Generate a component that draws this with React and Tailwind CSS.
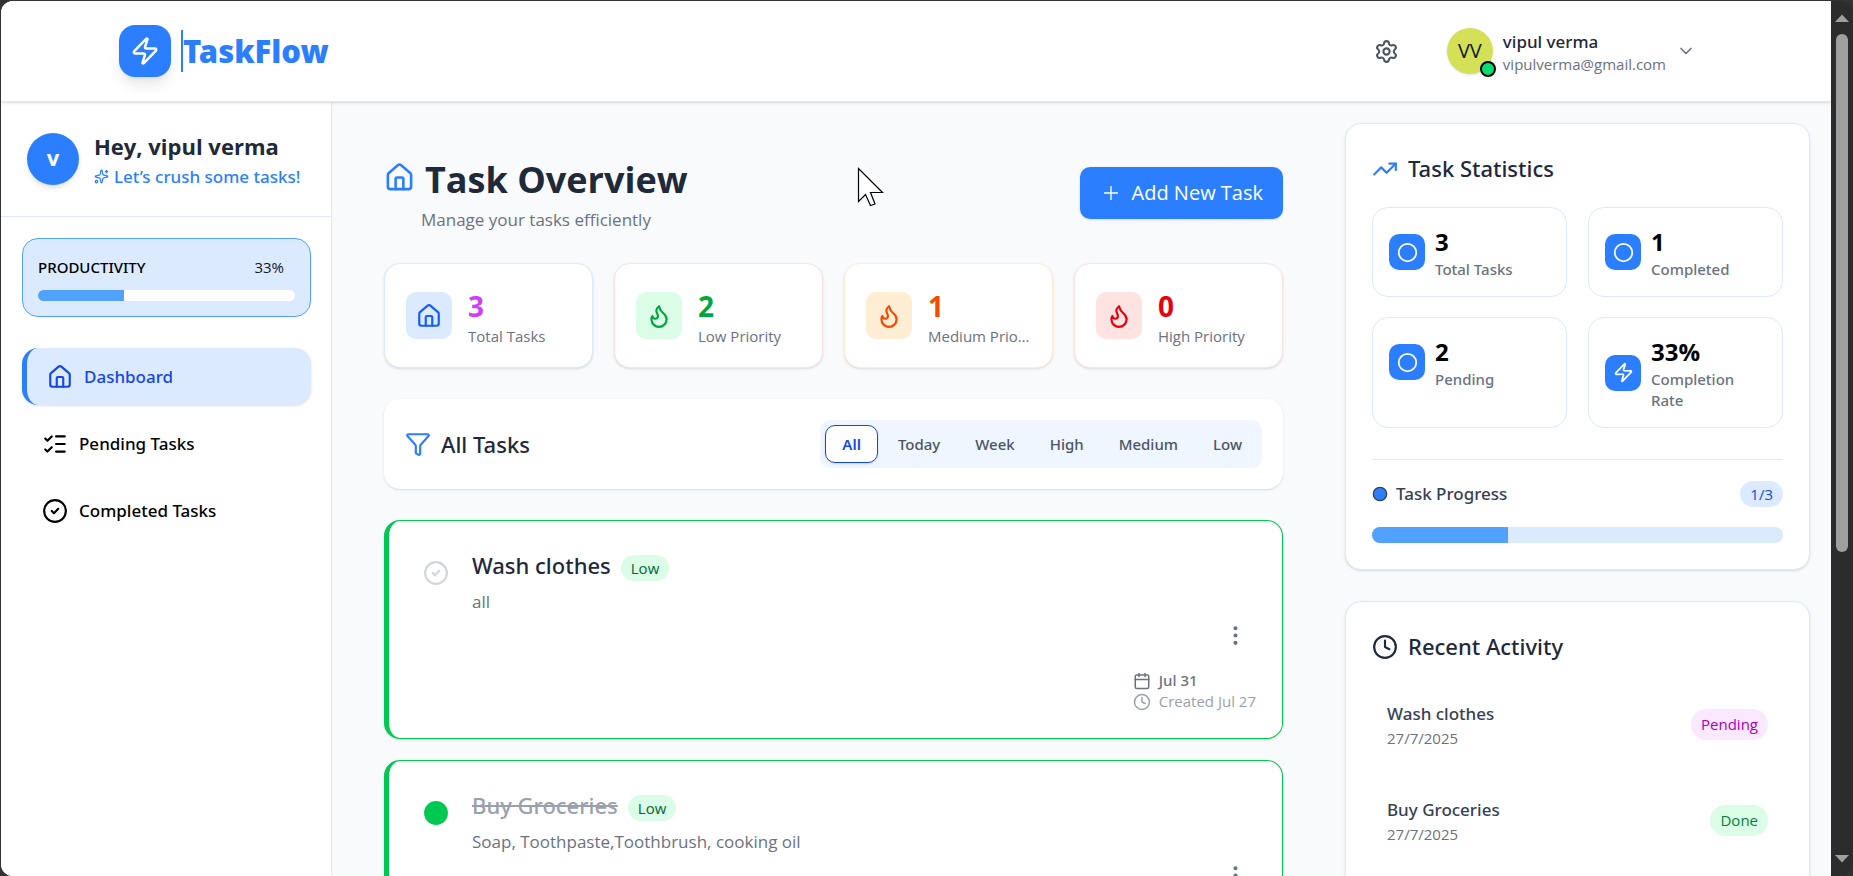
import {
  Calendar,
  ChevronDown,
  Circle,
  CircleCheck,
  Clock,
  EllipsisVertical,
  Flame,
  Funnel,
  House,
  ListChecks,
  Plus,
  Settings,
  Sparkles,
  TrendingUp,
  Zap,
} from "lucide-react";

const priorityStats = [
  { label: "Total Tasks", value: 3, icon: House, border: "border-blue-100", tile: "bg-blue-100 text-blue-600", number: "text-[#d03dfb]" },
  { label: "Low Priority", value: 2, icon: Flame, border: "border-red-100", tile: "bg-green-100 text-green-600", number: "text-green-600" },
  { label: "Medium Priority", value: 1, icon: Flame, border: "border-orange-100", tile: "bg-orange-100 text-orange-600", number: "text-orange-600" },
  { label: "High Priority", value: 0, icon: Flame, border: "border-red-100", tile: "bg-red-100 text-red-600", number: "text-red-600" },
];

const filters = ["All", "Today", "Week", "High", "Medium", "Low"];

const tasks = [
  { title: "Wash clothes", priority: "Low", description: "all", due: "Jul 31", created: "Created Jul 27", done: false },
  { title: "Buy Groceries", priority: "Low", description: "Soap, Toothpaste,Toothbrush, cooking oil", due: "Jul 31", created: "Created Jul 27", done: true },
];

const summary = [
  { label: "Total Tasks", value: "3", icon: Circle },
  { label: "Completed", value: "1", icon: Circle },
  { label: "Pending", value: "2", icon: Circle },
  { label: "Completion Rate", value: "33%", icon: Zap },
];

const activity = [
  { title: "Wash clothes", date: "27/7/2025", status: "Pending", tone: "bg-fuchsia-100 text-fuchsia-700" },
  { title: "Buy Groceries", date: "27/7/2025", status: "Done", tone: "bg-green-100 text-green-700" },
];

function Header() {
  return (
    <header className="relative z-10 flex h-[101px] shrink-0 items-center justify-between border-b border-gray-200 bg-white pr-[123px] pl-[118px] shadow-sm">
      <a href="#" className="flex items-center gap-[10px]">
        <span className="flex size-[52px] items-center justify-center rounded-2xl bg-blue-500 text-white shadow-lg">
          <Zap size={30} />
        </span>
        <span className="border-l-2 border-blue-500 font-['Noto_Sans',sans-serif] text-[31px] leading-[42px] font-black text-blue-500">TaskFlow</span>
      </a>
      <div className="flex items-center gap-[38px]">
        <button type="button" aria-label="Settings" className="p-[10px] text-gray-600">
          <Settings size={25} />
        </button>
        <button type="button" className="flex items-center gap-[10px] pr-3 text-left">
          <span className="relative flex size-[46px] items-center justify-center rounded-full bg-[#d4e157] text-[20px] text-gray-900 shadow-sm">
            VV
            <span className="absolute -right-[3px] -bottom-[3px] size-4 rounded-full border-2 border-black bg-green-400" />
          </span>
          <span className="pt-[2px]">
            <span className="block font-['Noto_Sans',sans-serif] text-[17px] leading-6 font-medium text-gray-800">vipul verma</span>
            <span className="block text-[15px] leading-[21px] text-gray-500">vipulverma@gmail.com</span>
          </span>
          <ChevronDown size={20} className="text-gray-500" />
        </button>
      </div>
    </header>
  );
}

function Sidebar() {
  return (
    <aside className="flex w-[331px] shrink-0 flex-col border-r border-blue-100 bg-white shadow-xs">
      <div className="flex h-[115px] items-center gap-[15px] border-b border-blue-100 px-[26px]">
        <span className="flex size-[52px] items-center justify-center rounded-full bg-blue-500 pb-1 text-[22px] font-bold text-white shadow-md">v</span>
        <div className="pt-1">
          <h2 className="text-[22px] leading-[31px] font-bold text-gray-800">Hey, vipul verma</h2>
          <p className="flex items-center gap-[5px] font-['Noto_Sans',sans-serif] text-[17px] leading-[30px] font-medium text-blue-500">
            <Sparkles size={15} /> Let’s crush some tasks!
          </p>
        </div>
      </div>
      <div className="pt-[21px] pr-5 pl-[21px]">
        <section className="rounded-2xl border border-blue-400 bg-blue-100 px-[15px] pt-[18px] pb-[15px]">
          <div className="flex items-center justify-between pr-[11px] leading-[21px]">
            <h3 className="font-['Noto_Sans',sans-serif] text-[15px] font-medium text-black">PRODUCTIVITY</h3>
            <span className="text-[15px] text-gray-900">33%</span>
          </div>
          <div className="mt-3 h-[11px] overflow-hidden rounded-full bg-white">
            <div className="h-full w-1/3 bg-blue-400" />
          </div>
        </section>
        <nav className="mt-[31px] flex flex-col gap-[10px] font-['Noto_Sans',sans-serif] text-[17px] font-medium text-black">
          <a href="#dashboard" className="flex h-[57px] items-center gap-[11px] rounded-2xl border-l-[5px] border-blue-500 bg-blue-100 px-5 text-blue-700 shadow-sm">
            <House size={26} /> Dashboard
          </a>
          <a href="#pending" className="flex h-[57px] items-center gap-[11px] px-5">
            <ListChecks size={26} /> Pending Tasks
          </a>
          <a href="#completed" className="flex h-[57px] items-center gap-[11px] px-5">
            <CircleCheck size={26} /> Completed Tasks
          </a>
        </nav>
      </div>
    </aside>
  );
}

function TaskCard({ task }) {
  return (
    <article className="flex h-[219px] rounded-2xl border border-l-[5px] border-green-500 bg-white pt-[26px] pr-[26px] pl-[34px] shadow-sm">
      <button
        type="button"
        aria-label={task.done ? "Mark as pending" : "Mark as complete"}
        className={task.done ? "mt-[13px] h-[26px] text-green-500" : "mt-[13px] h-[26px] text-gray-300"}
      >
        <CircleCheck size={26} fill={task.done ? "currentColor" : "none"} />
      </button>
      <div className="ml-[23px] flex-1">
        <div className="flex items-center gap-[10px]">
          <h3
            className={
              task.done
                ? "font-['Noto_Sans',sans-serif] text-[22px] leading-[37px] font-medium text-gray-400 line-through"
                : "font-['Noto_Sans',sans-serif] text-[22px] leading-[37px] font-medium text-gray-800"
            }
          >
            {task.title}
          </h3>
          <span className="mt-[5px] rounded-full bg-green-100 px-[10px] text-[15px] leading-[26px] text-green-800">{task.priority}</span>
        </div>
        <p className="mt-1 text-[17px] leading-7 text-gray-500">{task.description}</p>
      </div>
      <div className="flex flex-col items-end pt-[76px]">
        <button type="button" aria-label="Task options" className="mr-2 text-gray-500">
          <EllipsisVertical size={25} />
        </button>
        <div className="mt-[22px] text-[15px] leading-[21px]">
          <p className="flex items-center gap-2 font-['Noto_Sans',sans-serif] font-medium text-gray-500">
            <Calendar size={18} /> {task.due}
          </p>
          <p className="flex items-center gap-2 text-gray-400">
            <Clock size={18} /> {task.created}
          </p>
        </div>
      </div>
    </article>
  );
}

function Overview() {
  return (
    <main className="min-w-0 pt-[51px]">
      <div className="flex items-start justify-between">
        <div>
          <h1 className="flex items-center gap-[10px] text-[36px] leading-[53px] font-bold text-gray-800">
            <House size={31} className="-mt-1 text-blue-500" /> Task Overview
          </h1>
          <p className="pl-[37px] text-[17px] leading-[27px] text-gray-500">Manage your tasks efficiently</p>
        </div>
        <button type="button" className="mt-[14px] flex h-[52px] items-center gap-[10px] rounded-[10px] bg-blue-500 px-5 text-[20px] text-white shadow-sm">
          <Plus size={22} strokeWidth={1.5} /> Add New Task
        </button>
      </div>
      <section className="mt-[30px] grid grid-cols-4 gap-[21px]">
        {priorityStats.map((stat) => (
          <div key={stat.label} className={`flex h-[105px] items-center gap-4 rounded-2xl border bg-white px-[21px] shadow-sm ${stat.border}`}>
            <span className={`flex h-[47px] w-[46px] shrink-0 items-center justify-center rounded-[10px] ${stat.tile}`}>
              <stat.icon size={26} />
            </span>
            <div className="min-w-0 pt-1">
              <p className={`text-[28px] leading-9 font-bold ${stat.number}`}>{stat.value}</p>
              <p className="truncate text-[15px] leading-6 text-gray-500">{stat.label}</p>
            </div>
          </div>
        ))}
      </section>
      <section className="mt-[31px] flex h-[90px] items-center justify-between rounded-2xl bg-white px-[21px] shadow-sm">
        <h2 className="flex items-center gap-[10px] font-['Noto_Sans',sans-serif] text-[22px] font-medium text-gray-800">
          <Funnel size={26} className="text-blue-500" /> All Tasks
        </h2>
        <div className="flex h-12 items-center gap-[5px] rounded-[10px] bg-blue-50 px-[5px] font-['Noto_Sans',sans-serif] text-[15px] font-medium">
          {filters.map((name) => (
            <button
              key={name}
              type="button"
              className={
                name === "All"
                  ? "h-[38px] rounded-[10px] border border-blue-700 bg-white px-4 font-semibold text-blue-700 shadow-sm"
                  : "h-[38px] px-[15px] text-gray-600"
              }
            >
              {name}
            </button>
          ))}
        </div>
      </section>
      <section className="mt-[31px] flex flex-col gap-[21px]">
        {tasks.map((task) => (
          <TaskCard key={task.title} task={task} />
        ))}
      </section>
    </main>
  );
}

function StatsPanel() {
  return (
    <aside className="flex min-w-0 flex-col gap-[31px] pt-[21px]">
      <section className="rounded-2xl border border-blue-100 bg-white p-[26px] shadow-sm">
        <h2 className="flex items-center gap-[10px] font-['Noto_Sans',sans-serif] text-[22px] leading-[37px] font-medium text-gray-800">
          <TrendingUp size={26} className="text-blue-500" /> Task Statistics
        </h2>
        <div className="mt-5 grid grid-cols-2 gap-x-[21px] gap-y-5">
          {summary.map((item) => (
            <div key={item.label} className="rounded-2xl border border-blue-100 p-4">
              <div className="flex items-center gap-[10px]">
                <span className="flex size-9 shrink-0 items-center justify-center rounded-[10px] bg-blue-500 text-white">
                  <item.icon size={21} />
                </span>
                <div>
                  <p className="text-[24px] leading-[35px] font-bold text-black">{item.value}</p>
                  <p className="font-['Noto_Sans',sans-serif] text-[15px] leading-[21px] font-medium text-gray-500">{item.label}</p>
                </div>
              </div>
            </div>
          ))}
        </div>
        <div className="mt-[31px] border-t border-blue-100 pt-5">
          <div className="flex items-center justify-between">
            <h3 className="flex items-center gap-2 font-['Noto_Sans',sans-serif] text-[17px] leading-7 font-medium text-gray-700">
              <Circle size={16} className="fill-blue-500" /> Task Progress
            </h3>
            <span className="rounded-full bg-blue-100 px-[10px] text-[15px] leading-[26px] text-blue-700">1/3</span>
          </div>
          <div className="mt-[19px] h-4 overflow-hidden rounded-full bg-blue-100">
            <div className="h-full w-[33%] bg-blue-400" />
          </div>
        </div>
      </section>
      <section className="rounded-2xl border border-blue-100 bg-white p-[26px] shadow-sm">
        <h2 className="flex items-center gap-[10px] font-['Noto_Sans',sans-serif] text-[22px] leading-[37px] font-medium text-gray-800">
          <Clock size={26} /> Recent Activity
        </h2>
        <ul className="mt-[14px] flex flex-col gap-[5px]">
          {activity.map((item) => (
            <li key={item.title} className="flex h-[91px] items-center justify-between px-[15px]">
              <div>
                <p className="font-['Noto_Sans',sans-serif] text-[17px] leading-[26px] font-medium text-gray-700">{item.title}</p>
                <p className="text-[15px] leading-[22px] text-gray-500">{item.date}</p>
              </div>
              <span className={`rounded-full px-[10px] text-[15px] leading-[31px] ${item.tone}`}>{item.status}</span>
            </li>
          ))}
        </ul>
      </section>
    </aside>
  );
}

function Scrollbar() {
  return (
    <div aria-hidden="true" className="flex w-[22px] shrink-0 flex-col items-center justify-between bg-[#2c2c2c] pt-[13px] pb-[13px]">
      <svg width="14" height="8" viewBox="0 0 14 8" fill="#9f9f9f">
        <path d="M7 0.500L14 8H0z" />
      </svg>
      <div className="mt-3 mb-auto h-[61%] w-3 rounded-full bg-[#9f9f9f]" />
      <svg width="14" height="8" viewBox="0 0 14 8" fill="#9f9f9f">
        <path d="M7 7.500L14 0H0z" />
      </svg>
    </div>
  );
}

export default function App() {
  return (
    <div className="h-screen bg-[#333333] pt-px pl-px font-['Open_Sans','Noto_Sans',sans-serif]">
      <div className="flex h-full overflow-hidden rounded-xl">
        <div className="flex min-w-0 flex-1 flex-col bg-gray-50">
          <Header />
          <div className="flex min-h-0 flex-1 overflow-hidden">
            <Sidebar />
            <div className="grid min-w-0 flex-1 grid-cols-[minmax(0,899fr)_minmax(0,465fr)] gap-[62px] pr-[21px] pl-[52px]">
              <Overview />
              <StatsPanel />
            </div>
          </div>
        </div>
        <Scrollbar />
      </div>
      <svg aria-hidden="true" className="pointer-events-none absolute top-[167px] left-[857px]" width="27" height="40" viewBox="0 0 27 40">
        <path d="M1.500 1.500V34.500L8.500 27.500L13.500 38.500L18 37L13.500 25.500H25.500Z" fill="white" stroke="black" strokeWidth="1.200" />
      </svg>
    </div>
  );
}
